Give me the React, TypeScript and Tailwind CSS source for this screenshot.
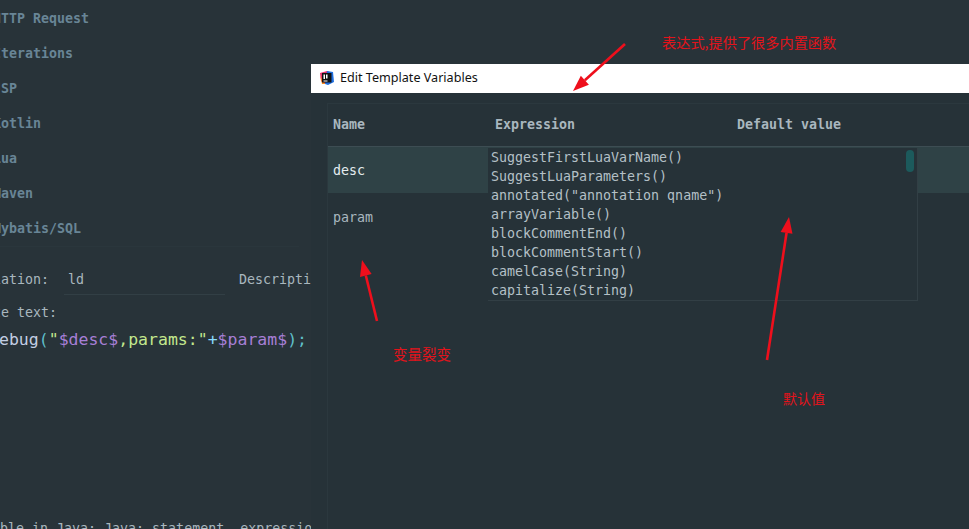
const SECTIONS = ["HTTP Request", "Iterations", "JSP", "Kotlin", "Lua", "Maven", "Mybatis/SQL"];

const EXPRESSIONS = [
  "SuggestFirstLuaVarName()",
  "SuggestLuaParameters()",
  'annotated("annotation qname")',
  "arrayVariable()",
  "blockCommentEnd()",
  "blockCommentStart()",
  "camelCase(String)",
  "capitalize(String)",
];

const MONO = "font-['DejaVu_Sans_Mono','Liberation_Mono',monospace]";
const NOTE = "absolute font-['Noto_Sans_CJK_SC','Noto_Sans',sans-serif] leading-[20px] text-[#e3131b] whitespace-nowrap";

function AppIcon() {
  return (
    <svg width="15" height="16" viewBox="0 0 15 16" className="shrink-0">
      <path d="M1 3 L8 1 L13 3 L12 9 L6 14 L2 11 Z" fill="#e8326f" />
      <path d="M1 5 L4 12 L8 14 L3 14 Z" fill="#f58a1f" />
      <path d="M8 1 L14 2 L15 12 L9 15 L6 14 Z" fill="#1f6fe0" />
      <rect x="3" y="3" width="9.5" height="9.5" fill="#111" />
      <rect x="4.5" y="4.5" width="1.5" height="4.5" fill="#fff" />
      <rect x="7" y="4.5" width="1.5" height="4" fill="#fff" />
      <rect x="4.5" y="10.5" width="4" height="1" fill="#fff" />
    </svg>
  );
}

function Arrow({ x1, y1, x2, y2 }: { x1: number; y1: number; x2: number; y2: number }) {
  const len = Math.hypot(x2 - x1, y2 - y1);
  const ux = (x2 - x1) / len;
  const uy = (y2 - y1) / len;
  const bx = x2 - ux * 16;
  const by = y2 - uy * 16;
  const head = `${x2},${y2} ${bx - uy * 6},${by + ux * 6} ${bx + uy * 6},${by - ux * 6}`;
  return (
    <>
      <line x1={x1} y1={y1} x2={bx} y2={by} stroke="#ee0f1c" strokeWidth="2.6" />
      <polygon points={head} fill="#ee0f1c" />
    </>
  );
}

function SettingsPanel() {
  return (
    <div className={`w-[311px] shrink-0 h-full overflow-hidden bg-[#283339] text-[13.3px] leading-[20px] ${MONO}`}>
      <div className="ml-[-7px] pt-px">
        {SECTIONS.map((s) => (
          <div key={s} className="h-[35px] flex items-center font-bold text-[#688596] whitespace-nowrap">
            {s}
          </div>
        ))}
      </div>
      <div className="h-[24px] border-t border-[#2a363c] mr-3" />
      <div className="ml-[-7px] flex items-start text-[#a9b7bf] whitespace-nowrap">
        <span className="w-[71px] shrink-0">iation:</span>
        <span className="w-[161px] h-[25px] shrink-0 border-b border-[#323f45] pl-[4px]">ld</span>
        <span className="ml-[14px] shrink-0">Description:</span>
      </div>
      <div className="ml-[-7px] mt-[8px] text-[#a9b7bf] whitespace-nowrap">te text:</div>
      <div className="ml-[-1px] mt-[5px] text-[16.5px] leading-[24px] whitespace-nowrap">
        <span className="text-[#c3cee3]">ebug</span>
        <span className="text-[#5fbfc9]">(</span>
        <span className="text-[#c3e88d]">"</span>
        <span className="text-[#a77fd6]">$desc$</span>
        <span className="text-[#c3e88d]">,params:"</span>
        <span className="text-[#89ddff]">+</span>
        <span className="text-[#a77fd6]">$param$</span>
        <span className="text-[#5fbfc9]">);</span>
      </div>
      <div className="ml-[-8px] mt-[167px] text-[#a9b7bf] whitespace-nowrap">
        able in Java: Java: statement, expression
      </div>
    </div>
  );
}

function TemplateDialog() {
  return (
    <div className="flex-1 min-w-0 h-full mt-[64px] flex flex-col bg-[#263238]">
      <div className="h-[29px] shrink-0 bg-white flex items-center gap-[6px] pl-[8px] pb-px font-['Noto_Sans',sans-serif] text-[12.6px] text-[#111]">
        <AppIcon />
        <span>Edit Template Variables</span>
      </div>
      <div className={`relative flex-1 ml-[16px] mt-[10px] border-l border-t border-[#2b383e] text-[13.3px] ${MONO}`}>
        <div className="h-[43px] flex items-center font-bold text-[#a9b7bf] border-b border-[#3d4d53]">
          <span className="w-[167px] pl-[5px]">Name</span>
          <span className="w-[242px]">Expression</span>
          <span>Default value</span>
        </div>
        <div className="h-[46px] bg-[#2f4246] flex items-center pl-[5px] pt-[2px] text-[#e4ecef]">desc</div>
        <div className="h-[48px] flex items-center pl-[5px] pt-[2px] text-[#a9b7bf]">param</div>

        <div className="absolute left-[160px] top-[44px] w-[430px] h-[153px] bg-[#263238] border-r border-b border-[#323f45] pl-[3px] text-[#b4c0c7]">
          {EXPRESSIONS.map((e) => (
            <div key={e} className="h-[19px] leading-[19px] whitespace-nowrap">
              {e}
            </div>
          ))}
          <div className="absolute right-[3px] top-[2px] w-[8px] h-[22px] rounded-[4px] bg-[#1c5a5c]" />
        </div>
      </div>
    </div>
  );
}

export default function App() {
  return (
    <div className="relative w-[969px] h-[529px] overflow-hidden flex bg-[#283339]">
      <SettingsPanel />
      <TemplateDialog />

      <svg width="969" height="529" className="absolute inset-0 pointer-events-none">
        <Arrow x1={625} y1={44} x2={573} y2={91} />
        <Arrow x1={377} y1={321} x2={362} y2={260} />
        <Arrow x1={767} y1={360} x2={789} y2={217} />
      </svg>
      <span className={`${NOTE} text-[14.2px] left-[662px] top-[32px]`}>表达式,提供了很多内置函数</span>
      <span className={`${NOTE} text-[14.5px] left-[393px] top-[344px]`}>变量裂变</span>
      <span className={`${NOTE} text-[14px] left-[783px] top-[388px]`}>默认值</span>
    </div>
  );
}
